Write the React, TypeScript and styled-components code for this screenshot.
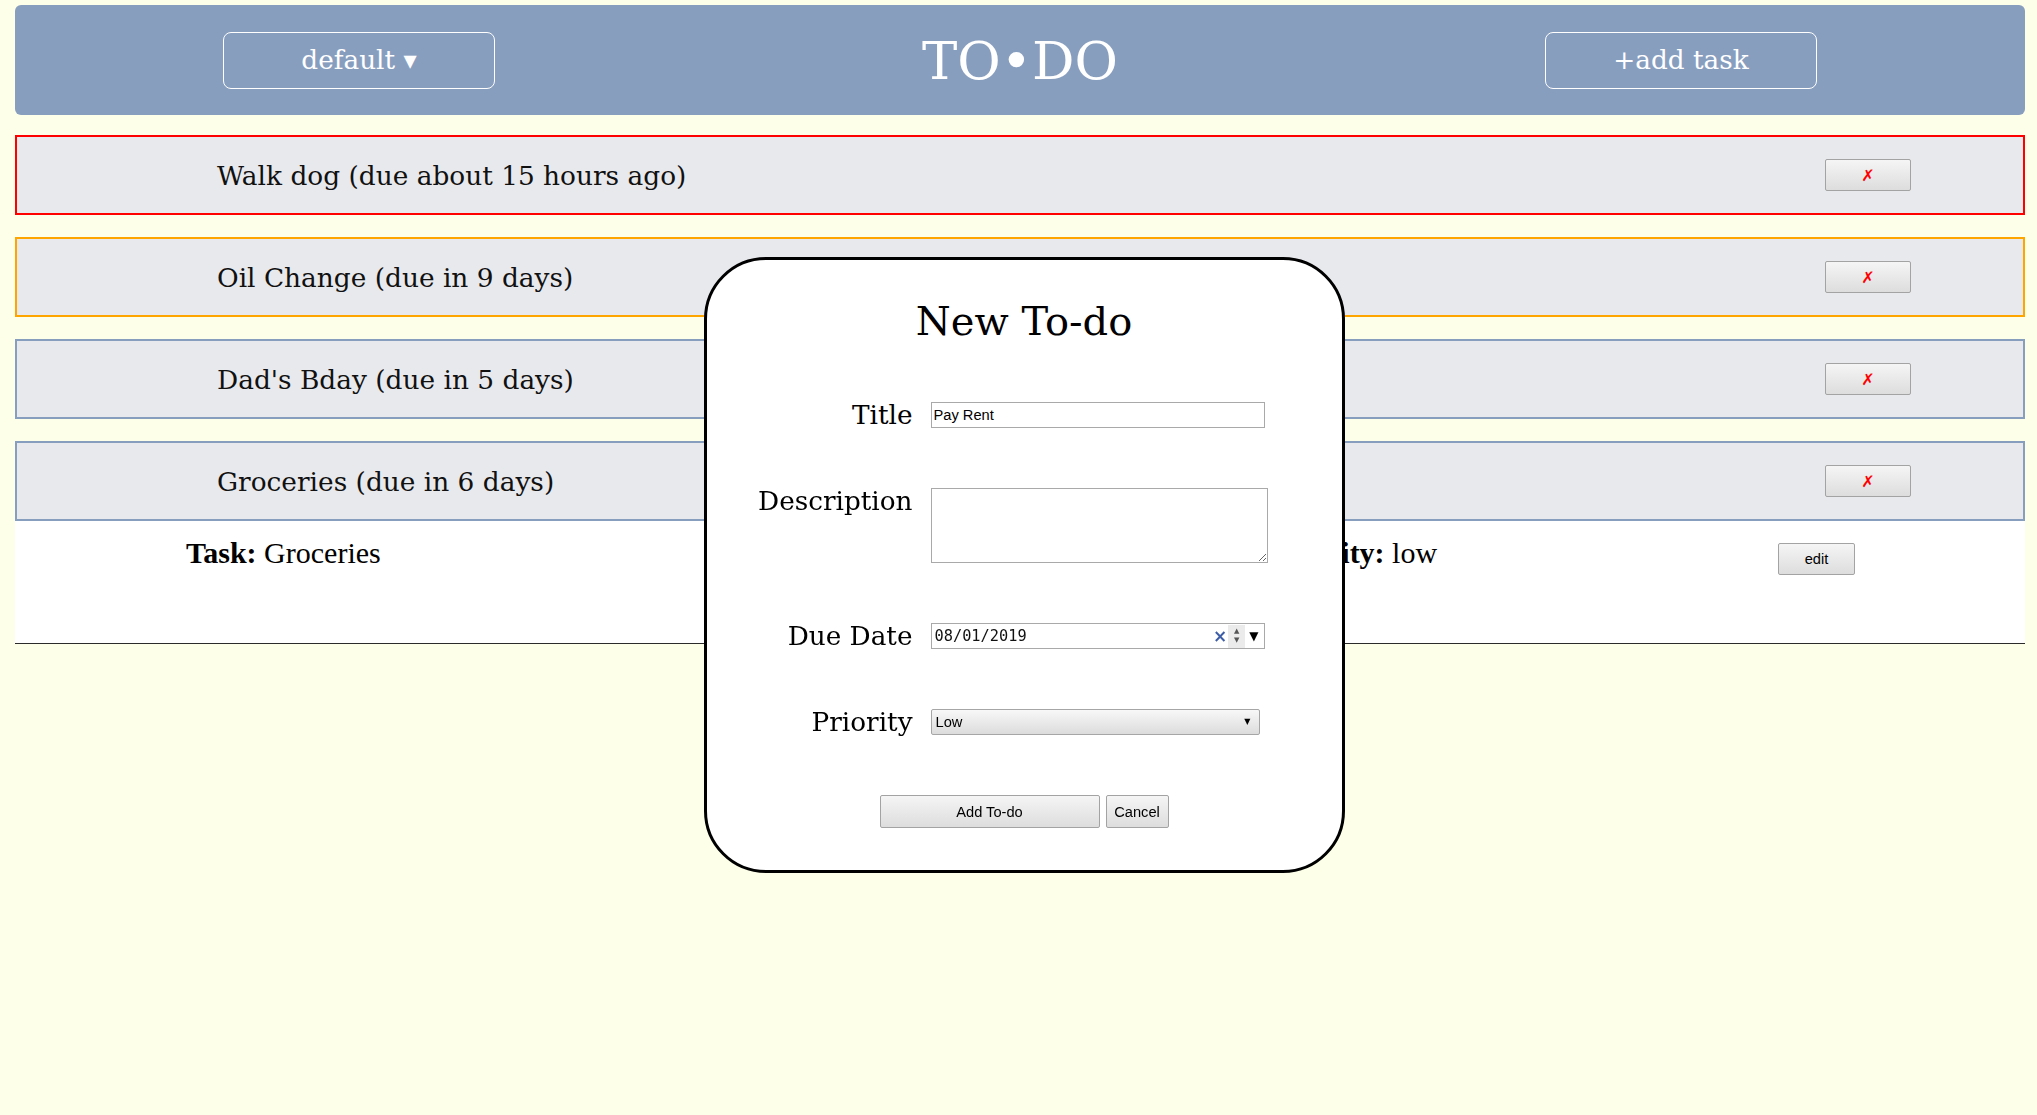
import React from 'react';
import styled, { createGlobalStyle } from 'styled-components';

const GlobalStyle = createGlobalStyle`
  html, body {
    margin: 0;
    padding: 0;
    background: #feffe9;
  }
  body {
    font-family: "DejaVu Serif", serif;
    color: #000;
  }
`;

const Page = styled.div`
  box-sizing: border-box;
  min-height: 1115px;
  padding: 5px 12px 0 15px;
`;

const Header = styled.header`
  height: 110px;
  background: #889ebf;
  border-radius: 6px;
  display: flex;
  align-items: center;
  justify-content: space-between;
  padding: 0 208px;
`;

const HeaderButton = styled.button`
  box-sizing: border-box;
  width: 272px;
  height: 57px;
  border: 1px solid #ffffff;
  border-radius: 8px;
  background: transparent;
  color: #ffffff;
  font-family: "DejaVu Serif", serif;
  font-size: 26.3px;
  cursor: pointer;
`;

const Brand = styled.h1`
  margin: 0;
  color: #ffffff;
  font-family: "DejaVu Serif", serif;
  font-size: 53px;
  font-weight: normal;
  line-height: 1;
`;

const TaskList = styled.div`
  margin-top: 20px;
  display: flex;
  flex-direction: column;
  gap: 22px;
`;

const TaskItem = styled.div``;

const TaskRow = styled.div<{ $border: string }>`
  box-sizing: border-box;
  height: 80px;
  border: 2px solid ${(p) => p.$border};
  background: #e8e9ed;
  display: flex;
  align-items: center;
  justify-content: space-between;
  padding: 0 112px 0 200px;
`;

const TaskTitle = styled.span`
  font-family: "DejaVu Serif", serif;
  font-size: 26.4px;
  color: #111;
`;

const NativeButton = styled.button<{ $w: number; $h: number }>`
  box-sizing: border-box;
  width: ${(p) => p.$w}px;
  height: ${(p) => p.$h}px;
  padding: 0;
  border: 1px solid #a3a3a3;
  border-radius: 2px;
  background: linear-gradient(#f5f5f5, #dddddd);
  font-family: "Liberation Sans", Arial, sans-serif;
  font-size: 14.67px;
  color: #000;
  cursor: pointer;
`;

const DeleteMark = styled.span`
  color: #ff0000;
  font-family: "DejaVu Sans", sans-serif;
  font-size: 16px;
`;

const Detail = styled.div`
  box-sizing: border-box;
  height: 123px;
  background: #ffffff;
  border-bottom: 1px solid #2b2b2b;
  display: grid;
  grid-template-columns: 554px 270px 263px 505px auto;
  align-items: start;
  padding: 15px 0 0 171px;
`;

const DetailText = styled.div`
  font-family: "Liberation Serif", "Times New Roman", serif;
  font-size: 30px;
  line-height: 33px;
  white-space: nowrap;
  b {
    font-weight: bold;
  }
`;

const EditSlot = styled.div`
  padding-top: 7px;
`;

const Modal = styled.div`
  position: fixed;
  z-index: 10;
  top: calc(50% - 300.5px);
  left: calc(50% - 315px);
  box-sizing: border-box;
  width: 641px;
  height: 616px;
  padding-top: 38px;
  background: #ffffff;
  border: 3px solid #000000;
  border-radius: 62px;
`;

const ModalTitle = styled.h2`
  margin: 0;
  text-align: center;
  font-family: "DejaVu Serif", serif;
  font-size: 40px;
  line-height: 47px;
  font-weight: normal;
`;

const FormGrid = styled.div`
  margin-top: 57px;
  display: grid;
  grid-template-columns: 206px 337px;
  column-gap: 18px;
  row-gap: 60px;
  align-items: center;
`;

const Label = styled.label<{ $top?: boolean }>`
  text-align: right;
  font-family: "DejaVu Serif", serif;
  font-size: 26.3px;
  line-height: 26px;
  align-self: ${(p) => (p.$top ? 'start' : 'center')};
`;

const TextInput = styled.input`
  box-sizing: border-box;
  width: 334px;
  height: 26px;
  margin: 0;
  padding: 1px 2px;
  border: 1px solid #a9a9a9;
  font-family: "Liberation Sans", Arial, sans-serif;
  font-size: 14.67px;
  outline: none;
`;

const TextArea = styled.textarea`
  box-sizing: border-box;
  width: 337px;
  height: 75px;
  margin: 0;
  border: 1px solid #a9a9a9;
  font-family: "Liberation Mono", monospace;
  font-size: 14px;
`;

const DateBox = styled.div`
  box-sizing: border-box;
  width: 334px;
  height: 26px;
  border: 1px solid #a9a9a9;
  display: flex;
  align-items: center;
  padding-left: 3px;
`;

const DateValue = styled.span`
  flex: 1;
  font-family: "DejaVu Sans Mono", monospace;
  font-size: 15.3px;
  color: #111;
`;

const ClearX = styled.span`
  color: #3d5da6;
  font-family: "DejaVu Sans", sans-serif;
  font-size: 17px;
  font-weight: bold;
  line-height: 1;
  margin-right: 1px;
`;

const Spinner = styled.span`
  width: 17px;
  height: 23px;
  background: #ebebeb;
  display: flex;
  flex-direction: column;
  align-items: center;
  justify-content: center;
  font-family: "DejaVu Sans", sans-serif;
  font-size: 7px;
  line-height: 9px;
  color: #555;
`;

const DropArrow = styled.span`
  font-family: "DejaVu Sans", sans-serif;
  font-size: 12px;
  margin: 0 5px 0 4px;
  color: #000;
`;

const SelectWrap = styled.div`
  position: relative;
  width: 329px;
  height: 26px;
`;

const Select = styled.select`
  box-sizing: border-box;
  width: 100%;
  height: 100%;
  margin: 0;
  padding: 0 0 0 4px;
  appearance: none;
  border: 1px solid #a6a6a6;
  border-radius: 2px;
  background: linear-gradient(#f8f8f8, #dcdcdc);
  font-family: "Liberation Sans", Arial, sans-serif;
  font-size: 14.67px;
  color: #000;
`;

const SelectArrow = styled.span`
  position: absolute;
  right: 9px;
  top: 8px;
  font-family: "DejaVu Sans", sans-serif;
  font-size: 8px;
  pointer-events: none;
`;

const ModalActions = styled.div`
  margin-top: 60px;
  display: flex;
  justify-content: center;
  gap: 6px;
`;

type Task = { title: string; due: string; color: string; open?: boolean };

const tasks: Task[] = [
  { title: 'Walk dog', due: 'due about 15 hours ago', color: '#ff0000' },
  { title: 'Oil Change', due: 'due in 9 days', color: '#ffa500' },
  { title: "Dad's Bday", due: 'due in 5 days', color: '#889ebf' },
  { title: 'Groceries', due: 'due in 6 days', color: '#889ebf', open: true },
];

function TaskDetail({ task }: { task: Task }) {
  return (
    <Detail>
      <DetailText>
        <b>Task:</b> {task.title}
      </DetailText>
      <DetailText>
        <b>Notes:</b> milk
      </DetailText>
      <DetailText>
        <b>Due:</b> 8/7
      </DetailText>
      <DetailText>
        <b>Priority:</b> low
      </DetailText>
      <EditSlot>
        <NativeButton $w={77} $h={32}>edit</NativeButton>
      </EditSlot>
    </Detail>
  );
}

function NewTodoModal() {
  return (
    <Modal>
      <ModalTitle>New To-do</ModalTitle>
      <FormGrid>
        <Label>Title</Label>
        <TextInput defaultValue="Pay Rent" />
        <Label $top>Description</Label>
        <TextArea />
        <Label>Due Date</Label>
        <DateBox>
          <DateValue>08/01/2019</DateValue>
          <ClearX>×</ClearX>
          <Spinner>
            <span>▲</span>
            <span>▼</span>
          </Spinner>
          <DropArrow>▼</DropArrow>
        </DateBox>
        <Label>Priority</Label>
        <SelectWrap>
          <Select defaultValue="low">
            <option value="low">Low</option>
            <option value="medium">Medium</option>
            <option value="high">High</option>
          </Select>
          <SelectArrow>▼</SelectArrow>
        </SelectWrap>
      </FormGrid>
      <ModalActions>
        <NativeButton $w={220} $h={33}>Add To-do</NativeButton>
        <NativeButton $w={63} $h={33}>Cancel</NativeButton>
      </ModalActions>
    </Modal>
  );
}

export default function App() {
  return (
    <>
      <GlobalStyle />
      <Page>
        <Header>
          <HeaderButton>default ▾</HeaderButton>
          <Brand>TO•DO</Brand>
          <HeaderButton>+add task</HeaderButton>
        </Header>
        <TaskList>
          {tasks.map((t) => (
            <TaskItem key={t.title}>
              <TaskRow $border={t.color}>
                <TaskTitle>
                  {t.title} ({t.due})
                </TaskTitle>
                <NativeButton $w={86} $h={32}>
                  <DeleteMark>✗</DeleteMark>
                </NativeButton>
              </TaskRow>
              {t.open && <TaskDetail task={t} />}
            </TaskItem>
          ))}
        </TaskList>
      </Page>
      <NewTodoModal />
    </>
  );
}
